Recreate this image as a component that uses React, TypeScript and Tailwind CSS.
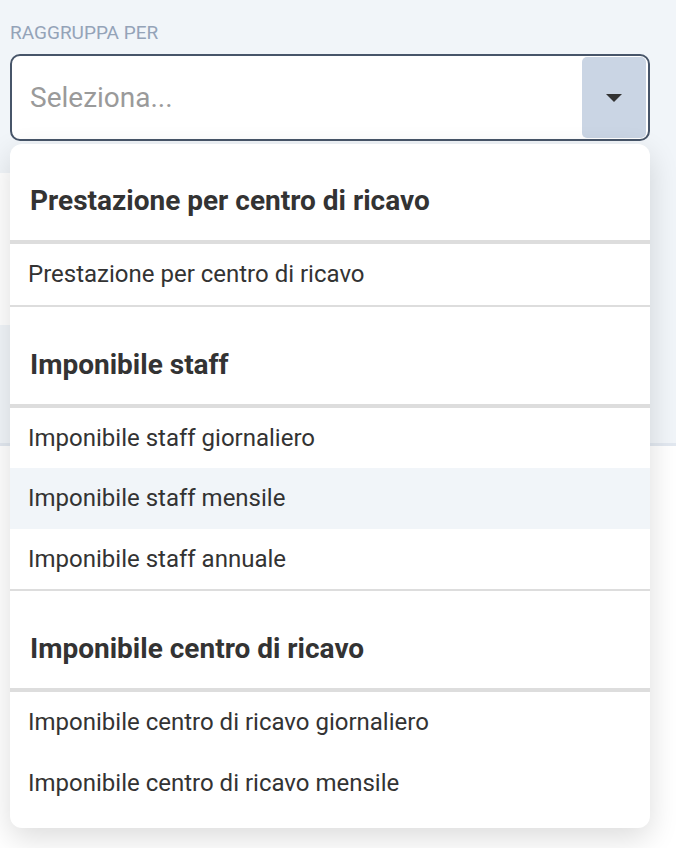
import { useState } from "react";

type Group = { title: string; options: string[] };

const groups: Group[] = [
  { title: "Prestazione per centro di ricavo", options: ["Prestazione per centro di ricavo"] },
  {
    title: "Imponibile staff",
    options: ["Imponibile staff giornaliero", "Imponibile staff mensile", "Imponibile staff annuale"],
  },
  {
    title: "Imponibile centro di ricavo",
    options: ["Imponibile centro di ricavo giornaliero", "Imponibile centro di ricavo mensile"],
  },
];

export default function App() {
  const [hovered, setHovered] = useState("Imponibile staff mensile");

  return (
    <div className="min-h-[848px] bg-white font-['Roboto',sans-serif] text-[#333]">
      <div className="h-[446px] bg-[#f1f5f9] border-b-[3px] border-[#e2e8f0]">
        <div className="w-[640px] ml-[10px] pt-[22px]">
          <label className="block text-[19px] leading-[22px] text-[#94a3b8] uppercase">Raggruppa per</label>
          <div className="relative mt-[10px] z-10">
            <div className="flex h-[87px] items-stretch rounded-[10px] border-2 border-[#475569] bg-white">
              <span className="flex flex-1 items-center pl-[18px] text-[28px] text-[#9a9a9a]">Seleziona...</span>
              <button className="my-px mr-[2px] flex w-[64px] items-center justify-center rounded-[5px] bg-[#cad5e4]">
                <svg width="16" height="8" viewBox="0 0 16 8">
                  <path d="M0 0h16L8 8z" fill="#333" />
                </svg>
              </button>
            </div>

            <div className="absolute left-0 right-0 top-[calc(100%+3px)] overflow-hidden rounded-[12px] bg-white pb-[15px] shadow-[0_10px_30px_rgba(0,0,0,0.14)]">
              {groups.map((g, gi) => (
                <div key={g.title} className={gi > 0 ? "border-t-2 border-[#dddddd]" : ""}>
                  <div
                    className={
                      "border-b-4 border-[#dddddd] pl-[20px] pb-[24px] text-[28px] font-bold leading-[30px] " +
                      (gi > 0 ? "pt-[43px]" : "pt-[42px]")
                    }
                  >
                    {g.title}
                  </div>
                  {g.options.map((o) => (
                    <div
                      key={o}
                      onMouseEnter={() => setHovered(o)}
                      className={
                        "flex h-[60.5px] items-center pl-[18px] text-[24px] " +
                        (hovered === o ? "bg-[#f1f5f9]" : "bg-white")
                      }
                    >
                      {o}
                    </div>
                  ))}
                </div>
              ))}
            </div>
          </div>
        </div>
        <div className="mt-[32px] h-[152px] w-[600px] bg-white" />
      </div>
    </div>
  );
}
